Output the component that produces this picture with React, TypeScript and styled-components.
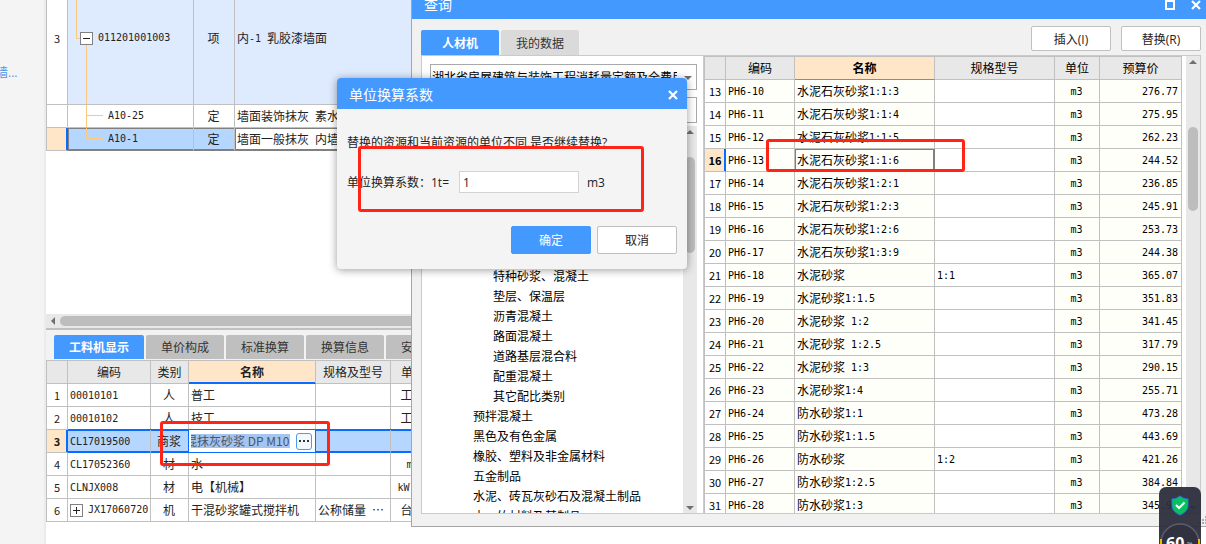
import React from "react";
import styled, { createGlobalStyle, css } from "styled-components";

const BLUE = "#4499ff";
const FOCUS = "#0a6cff";
const LINE = "#c0c0c0";
const RED = "#ff2416";

const GlobalStyle = createGlobalStyle`
  * { box-sizing: border-box; }
  html, body { margin: 0; overflow: hidden; }
  body, button, input, select {
    font-family: "Open Sans", "Noto Sans CJK SC", sans-serif;
    font-size: 12px;
    color: #222;
  }
`;

const Desktop = styled.div`
  position: relative;
  display: flex;
  height: 100vh;
  overflow: hidden;
  background: #fff;
`;

const Sidebar = styled.aside`
  flex: none;
  width: 46px;
  padding-top: 64px;
  overflow: hidden;
  background: #f4f4f4;
  border-right: 2px solid #ebebeb;
`;

const SideLink = styled.a`
  display: block;
  margin-left: -4px;
  line-height: 18px;
  color: #4e95ea;
  text-decoration: none;
  white-space: nowrap;
`;

const Workspace = styled.main`
  flex: 1;
  min-width: 0;
  display: flex;
  flex-direction: column;
`;

const UpperPane = styled.section`
  flex: 1;
  min-height: 0;
  overflow: hidden;
`;

const LowerPane = styled.section`
  flex: none;
  height: 230px;
`;

/* ---------- tables ---------- */

const Grid = styled.table<{ $scrolled?: number }>`
  width: 100%;
  table-layout: fixed;
  border-spacing: 0;
  border-left: 1px solid ${LINE};
  margin-top: -${(p) => p.$scrolled ?? 0}px;
  font-family: "Noto Sans CJK SC", sans-serif;
`;

const HeadCell = styled.th<{ $active?: boolean; $mark?: number }>`
  height: 24px;
  padding: 0;
  line-height: 22px;
  font-weight: ${(p) => (p.$active ? 700 : 400)};
  background: ${(p) => (p.$active ? "#ffe6c8" : "#e8e8e8")};
  border: solid ${LINE};
  border-width: 1px 1px 1px 0;
  white-space: nowrap;
  ${(p) =>
    p.$active &&
    css`
      border-bottom-color: ${p.$mark === 2 ? FOCUS : BLUE};
      box-shadow: ${p.$mark === 2 ? `inset 0 -1px ${FOCUS}` : "none"};
    `}
`;

const Cell = styled.td<{ $align?: "center" | "right"; $bg?: string }>`
  height: 23px;
  padding: 0 3px 0 2px;
  line-height: 20px;
  text-align: ${(p) => p.$align ?? "left"};
  background: ${(p) => p.$bg ?? "#fff"};
  border: solid ${LINE};
  border-width: 0 1px 1px 0;
  white-space: nowrap;
  overflow: hidden;
`;

const NumCell = styled(Cell)<{ $current?: boolean; $focus?: boolean }>`
  padding: 0;
  text-align: center;
  font-size: 11px;
  ${(p) =>
    p.$current &&
    css`
      background: #ffe6c8;
      font-weight: 700;
    `}
  ${(p) =>
    p.$focus &&
    css`
      border-right-color: ${FOCUS};
      box-shadow: inset -1px 0 ${FOCUS};
    `}
`;

const FocusCell = styled(Cell)`
  background: #b5d6ff;
  border-bottom-color: ${FOCUS};
  box-shadow: 0 -1px ${FOCUS}, inset 0 1px ${FOCUS}, inset 0 -1px ${FOCUS};
`;

const EditCell = styled(Cell)`
  border-color: ${FOCUS};
  box-shadow: 0 -1px ${FOCUS}, -1px 0 ${FOCUS};
`;

const PickedCell = styled(Cell)<{ $box?: boolean }>`
  border-bottom-color: #808080;
  box-shadow: inset 0 1px #808080, inset 0 -1px #808080${(p) =>
    p.$box ? ", inset 1px 0 #808080" : ""};
`;

const BoxedCell = styled(Cell)`
  border-right-color: #808080;
  box-shadow: inset 0 1px #808080, inset 1px 0 #808080, inset -1px 0 #808080;
`;

const TallCell = styled(Cell)`
  height: 133px;
`;

const Tree = styled.div`
  display: flex;
  align-items: center;
  margin: 0 -3px 0 -2px;
  svg { display: block; flex: none; overflow: visible; }
`;

const Latin = styled.span`
  font-family: "DejaVu Sans Mono", monospace;
  font-size: 10px;
  line-height: 12px;
  vertical-align: 1px;
  white-space: pre;
`;

/* Half-width runs are set on a 6px pitch, full-width characters on 12px. */
function Mixed({ children }: { children: string }) {
  const runs = children.split(/([\x20-\x7e]+)/).filter(Boolean);
  return (
    <>
      {runs.map((r, i) =>
        /^[\x20-\x7e]/.test(r) ? <Latin key={i}>{r}</Latin> : <span key={i}>{r}</span>
      )}
    </>
  );
}

/* ---------- lower pane parts ---------- */

const HScroll = styled.div`
  display: flex;
  align-items: center;
  gap: 5px;
  height: 14px;
  padding-left: 4px;
  background: #e8e8e8;
  svg { flex: none; }
`;

const HThumb = styled.div`
  flex: 1;
  height: 10px;
  border-radius: 5px;
  background: #bdbdbd;
`;

const TabBar = styled.div`
  display: flex;
  gap: 2px;
  height: 32px;
  padding: 5px 0 0 8px;
  overflow: hidden;
  background: #f2f2f2;
  border-top: 2px solid ${LINE};
`;

const Tab = styled.button<{ $active?: boolean; $wide?: boolean; $light?: boolean }>`
  flex: none;
  width: ${(p) => (p.$wide ? 90 : 78)}px;
  height: ${(p) => (p.$light ? 25 : 24)}px;
  padding: 0;
  border: 0;
  border-radius: 2px 2px 0 0;
  font-weight: ${(p) => (p.$active ? 700 : 400)};
  color: ${(p) => (p.$active ? "#fff" : "#333")};
  background: ${(p) => (p.$active ? BLUE : p.$light ? "#dadada" : "#bfbfbf")};
`;

const Editor = styled.div`
  display: flex;
  align-items: center;
  gap: 6px;
  height: 22px;
`;

const EditInput = styled.input`
  flex: none;
  width: 99px;
  height: 14px;
  padding: 0;
  border: 0;
  text-indent: -6px;
  line-height: 14px;
  font-family: "Noto Sans CJK SC", sans-serif;
  color: #46566c;
  background: #a5c5f0;
`;

const MoreButton = styled.button`
  flex: none;
  display: flex;
  align-items: center;
  justify-content: center;
  width: 16px;
  height: 17px;
  padding: 0;
  border: 1px solid #4a9fe0;
  border-radius: 3px;
  background: #f3f8fd;
`;

/* ---------- query window ---------- */

const QueryWindow = styled.section`
  position: absolute;
  left: 411px;
  right: -6px;
  top: -11px;
  bottom: 17px;
  display: flex;
  flex-direction: column;
  padding: 0 10px 12px 9px;
  background: #f1f1f1;
  border: 1px solid #a6a6a6;
`;

const QueryTitle = styled.header`
  flex: none;
  display: flex;
  align-items: center;
  gap: 16px;
  height: 29px;
  margin: 0 -10px 0 -9px;
  padding: 0 10px 0 12px;
  color: #fff;
  background: ${BLUE};
`;

const WindowName = styled.h1`
  flex: 1;
  margin: 0;
  font-size: 14px;
  font-weight: 400;
  line-height: 20px;
`;

const IconButton = styled.button`
  display: flex;
  padding: 0;
  border: 0;
  background: none;
`;

const QueryBar = styled.div`
  flex: none;
  display: flex;
  align-items: flex-end;
  gap: 2px;
  height: 36px;
`;

const QueryActions = styled.div`
  display: flex;
  gap: 10px;
  margin-left: auto;
  padding-bottom: 4px;
`;

const Button = styled.button<{ $primary?: boolean; $tall?: boolean }>`
  width: 80px;
  height: ${(p) => (p.$tall ? 28 : 25)}px;
  padding: 0;
  border: 1px solid ${(p) => (p.$primary ? BLUE : LINE)};
  border-radius: 2px;
  color: ${(p) => (p.$primary ? "#fff" : "#222")};
  background: ${(p) => (p.$primary ? BLUE : "#fff")};
`;

const Panel = styled.div`
  flex: 1;
  min-height: 0;
  display: flex;
  background: #fff;
  border: 1px solid #cacaca;
`;

const Catalogue = styled.div`
  flex: none;
  display: flex;
  flex-direction: column;
  width: 281px;
  padding: 8px 6px 0 8px;
`;

const SelectBox = styled.div`
  position: relative;
  height: 26px;
  margin-bottom: 7px;
  svg { position: absolute; right: 5px; top: 11px; }
`;

const Select = styled.select`
  appearance: none;
  width: 100%;
  height: 26px;
  padding: 0 19px 0 1px;
  border: 1px solid #a9a9a9;
  border-radius: 0;
  color: #000;
  background: #fff;
`;

const SearchInput = styled.input`
  height: 26px;
  padding: 0 4px;
  border: 1px solid #a9a9a9;
`;

const TreeArea = styled.div`
  flex: 1;
  min-height: 0;
  display: flex;
  margin-top: 3px;
  overflow: hidden;
`;

const TreeList = styled.ul`
  flex: 1;
  margin: 0;
  padding: 141px 0 0 43px;
  list-style: none;
  color: #000;
`;

const TreeItem = styled.li<{ $deep?: boolean }>`
  height: 20px;
  padding-left: ${(p) => (p.$deep ? 20 : 0)}px;
  line-height: 20px;
  white-space: nowrap;
`;

const VScroll = styled.div`
  flex: none;
  display: flex;
  flex-direction: column;
  align-items: center;
  width: 14px;
  padding: 3px 0;
  background: #e8e8e8;
`;

const VThumb = styled.div<{ $gap: number; $size: number }>`
  width: 10px;
  height: ${(p) => p.$size}px;
  margin: ${(p) => p.$gap}px 0 auto;
  border-radius: 5px;
  background: #bdbdbd;
`;

const Results = styled.div`
  flex: 1;
  min-width: 0;
  display: flex;
  gap: 4px;
  overflow: hidden;
  border-left: 1px solid #cacaca;
`;

const ResultsTable = styled.div`
  flex: 1;
  min-width: 0;
  color: #000;
`;

const Grip = styled.svg`
  position: absolute;
  right: 4px;
  bottom: 2px;
`;

/* ---------- dialog ---------- */

const Dialog = styled.section`
  position: absolute;
  left: 337px;
  top: 78px;
  width: 350px;
  border-radius: 4px;
  background: #f4f4f4;
  box-shadow: 0 1px 8px rgba(0, 0, 0, 0.4);
`;

const DialogTitle = styled.header`
  display: flex;
  align-items: center;
  height: 31px;
  padding: 2px 9px 0 12px;
  border-radius: 4px 4px 0 0;
  color: #fff;
  background: ${BLUE};
`;

const DialogBody = styled.div`
  padding: 24px 10px 15px;
`;

const Message = styled.p`
  margin: 0 0 19px;
  line-height: 20px;
  white-space: nowrap;
`;

const FactorRow = styled.div`
  display: flex;
  align-items: center;
  height: 20px;
  margin-bottom: 34px;
`;

const FactorLabel = styled.label`
  width: 112px;
  white-space: nowrap;
`;

const FactorInput = styled.input`
  width: 120px;
  height: 22px;
  margin-right: 8px;
  padding: 0 3px;
  border: 1px solid #d4d4d4;
  background: #fff;
`;

const DialogActions = styled.footer`
  display: flex;
  justify-content: flex-end;
  gap: 6px;
`;

/* ---------- overlays ---------- */

const Highlight = styled.div<{ $x: number; $y: number; $w: number; $h: number }>`
  position: absolute;
  left: ${(p) => p.$x}px;
  top: ${(p) => p.$y}px;
  width: ${(p) => p.$w}px;
  height: ${(p) => p.$h}px;
  border: 3px solid ${RED};
  border-radius: 3px;
  pointer-events: none;
`;

const Widget = styled.aside`
  position: absolute;
  right: 5px;
  bottom: 0;
  width: 42px;
  height: 57px;
  overflow: hidden;
  border-radius: 7px 7px 0 0;
  background: rgba(43, 46, 58, 0.94);
  svg { display: block; }
`;

/* ---------- drawings ---------- */

const Arrow = ({ dir, color = "#6e6e78" }: { dir: "up" | "down" | "left"; color?: string }) => {
  const d = { up: "M0 5L4 1L8 5Z", down: "M0 1H8L4 5Z", left: "M5 0V8L1 4Z" }[dir];
  return (
    <svg width={dir === "left" ? 5 : 8} height={dir === "left" ? 8 : 5} aria-hidden="true">
      <path d={d} fill={color} />
    </svg>
  );
};

const Cross = () => (
  <svg width="10" height="10" viewBox="0 0 10 10" aria-hidden="true">
    <path d="M1 1L9 9M9 1L1 9" stroke="#fff" strokeWidth="2.2" />
  </svg>
);

const Expander = ({ x, y, plus }: { x: number; y: number; plus?: boolean }) => (
  <g transform={`translate(${x} ${y})`}>
    <rect x="0.5" y="0.5" width="12" height="12" fill="#fff" stroke="#808080" />
    <path d={plus ? "M3 6.5H10M6.5 3V10" : "M3 6.5H10"} stroke="#222" fill="none" />
  </g>
);

const BRANCH = "#ffc680";

/* ---------- data ---------- */

const resources = [
  ["水泥石灰砂浆1:1:3", "", "276.77"],
  ["水泥石灰砂浆1:1:4", "", "275.95"],
  ["水泥石灰砂浆1:1:5", "", "262.23"],
  ["水泥石灰砂浆1:1:6", "", "244.52"],
  ["水泥石灰砂浆1:2:1", "", "236.85"],
  ["水泥石灰砂浆1:2:3", "", "245.91"],
  ["水泥石灰砂浆1:2:6", "", "253.73"],
  ["水泥石灰砂浆1:3:9", "", "244.38"],
  ["水泥砂浆", "1:1", "365.07"],
  ["水泥砂浆1:1.5", "", "351.83"],
  ["水泥砂浆 1:2", "", "341.45"],
  ["水泥砂浆 1:2.5", "", "317.79"],
  ["水泥砂浆 1:3", "", "290.15"],
  ["水泥砂浆1:4", "", "255.71"],
  ["防水砂浆1:1", "", "473.28"],
  ["防水砂浆1:1.5", "", "443.69"],
  ["防水砂浆", "1:2", "421.26"],
  ["防水砂浆1:2.5", "", "384.84"],
  ["防水砂浆1:3", "", "345.93"],
].map(([name, spec, price], i) => ({ no: 13 + i, code: `PH6-${10 + i}`, name, spec, price }));

const categories: [string, boolean][] = [
  ["特种砂浆、混凝土", true],
  ["垫层、保温层", true],
  ["沥青混凝土", true],
  ["路面混凝土", true],
  ["道路基层混合料", true],
  ["配重混凝土", true],
  ["其它配比类别", true],
  ["预拌混凝土", false],
  ["黑色及有色金属", false],
  ["橡胶、塑料及非金属材料", false],
  ["五金制品", false],
  ["水泥、砖瓦灰砂石及混凝土制品", false],
  ["木、竹材料及其制品", false],
];

const materials = [
  ["00010101", "人", "普工", "", "工日"],
  ["00010102", "人", "技工", "", "工日"],
  ["CL17019500", "商浆", "", "", ""],
  ["CL17052360", "材", "水", "", "m3"],
  ["CLNJX008", "材", "电【机械】", "", "kW·h"],
  ["JX17060720", "机", "干混砂浆罐式搅拌机", "公称储量 …", "台班"],
];

const IVORY = "#fffffa";

/* ---------- sections ---------- */

function BillTable() {
  return (
    <Grid $scrolled={28}>
      <colgroup>
        <col style={{ width: 21 }} />
        <col style={{ width: 126 }} />
        <col style={{ width: 41 }} />
        <col />
      </colgroup>
      <tbody>
        <tr>
          <NumCell>3</NumCell>
          <TallCell $bg="#deeafe">
            <Tree>
              <svg width="30" height="132" aria-hidden="true">
                <path d="M8.5 0V66.5H12M18.5 73V133" stroke={BRANCH} fill="none" />
                <Expander x={12} y={60} />
              </svg>
              <Mixed>011201001003</Mixed>
            </Tree>
          </TallCell>
          <TallCell $bg="#deeafe" $align="center">项</TallCell>
          <TallCell $bg="#deeafe"><Mixed>内-1 乳胶漆墙面</Mixed></TallCell>
        </tr>
        <tr>
          <NumCell />
          <Cell>
            <Tree>
              <svg width="40" height="22" aria-hidden="true">
                <path d="M18.5 0V23M18.5 10.5H35" stroke={BRANCH} fill="none" />
              </svg>
              <Mixed>A10-25</Mixed>
            </Tree>
          </Cell>
          <Cell $align="center">定</Cell>
          <Cell><Mixed>墙面装饰抹灰 素水泥浆界面剂</Mixed></Cell>
        </tr>
        <tr>
          <NumCell $current $focus />
          <PickedCell $bg="#b5d6ff" $box>
            <Tree>
              <svg width="40" height="22" aria-hidden="true">
                <path d="M18.5 0V10.5H35" stroke={BRANCH} fill="none" />
              </svg>
              <Mixed>A10-1</Mixed>
            </Tree>
          </PickedCell>
          <PickedCell $bg="#b5d6ff" $align="center">定</PickedCell>
          <PickedCell $box><Mixed>墙面一般抹灰 内墙</Mixed></PickedCell>
        </tr>
      </tbody>
    </Grid>
  );
}

function MaterialTable() {
  return (
    <Grid>
      <colgroup>
        <col style={{ width: 21 }} />
        <col style={{ width: 83 }} />
        <col style={{ width: 38 }} />
        <col style={{ width: 127 }} />
        <col style={{ width: 75 }} />
        <col style={{ width: 45 }} />
        <col />
      </colgroup>
      <thead>
        <tr>
          <HeadCell />
          <HeadCell>编码</HeadCell>
          <HeadCell>类别</HeadCell>
          <HeadCell $active $mark={2}>名称</HeadCell>
          <HeadCell>规格及型号</HeadCell>
          <HeadCell>单位</HeadCell>
          <HeadCell />
        </tr>
      </thead>
      <tbody>
        {materials.map(([code, kind, name, spec, unit], i) => {
          const current = i === 2;
          const C = current ? FocusCell : Cell;
          return (
            <tr key={code}>
              <NumCell $current={current} $focus={current}>{i + 1}</NumCell>
              <C>
                {i === 5 ? (
                  <Tree>
                    <svg width="20" height="13" aria-hidden="true">
                      <Expander x={2} y={0} plus />
                    </svg>
                    <Mixed>{code}</Mixed>
                  </Tree>
                ) : (
                  <Mixed>{code}</Mixed>
                )}
              </C>
              <C $align="center">{kind}</C>
              {current ? (
                <EditCell>
                  <Editor>
                    <EditInput aria-label="名称" defaultValue="混抹灰砂浆 DP M10" />
                    <MoreButton aria-label="选择">
                      <svg width="10" height="2" aria-hidden="true">
                        <path d="M0 1H2M4 1H6M8 1H10" stroke="#333" strokeWidth="2" />
                      </svg>
                    </MoreButton>
                  </Editor>
                </EditCell>
              ) : (
                <C><Mixed>{name}</Mixed></C>
              )}
              <C><Mixed>{spec}</Mixed></C>
              <C $align="center"><Mixed>{unit}</Mixed></C>
              <C />
            </tr>
          );
        })}
      </tbody>
    </Grid>
  );
}

function ResourceTable() {
  return (
    <Grid>
      <colgroup>
        <col style={{ width: 21 }} />
        <col style={{ width: 69 }} />
        <col style={{ width: 140 }} />
        <col />
        <col style={{ width: 45 }} />
        <col style={{ width: 82 }} />
      </colgroup>
      <thead>
        <tr>
          <HeadCell />
          <HeadCell>编码</HeadCell>
          <HeadCell $active>名称</HeadCell>
          <HeadCell>规格型号</HeadCell>
          <HeadCell>单位</HeadCell>
          <HeadCell>预算价</HeadCell>
        </tr>
      </thead>
      <tbody>
        {resources.map((r) => {
          const current = r.no === 16;
          const Name = current ? BoxedCell : Cell;
          return (
            <tr key={r.no}>
              <NumCell $current={current} $focus={current}>{r.no}</NumCell>
              <Cell $bg={IVORY}><Mixed>{r.code}</Mixed></Cell>
              <Name $bg={IVORY}><Mixed>{r.name}</Mixed></Name>
              <Cell><Mixed>{r.spec}</Mixed></Cell>
              <Cell $bg={IVORY} $align="center"><Mixed>m3</Mixed></Cell>
              <Cell $bg={IVORY} $align="right"><Mixed>{r.price}</Mixed></Cell>
            </tr>
          );
        })}
      </tbody>
    </Grid>
  );
}

export default function App() {
  return (
    <Desktop>
      <GlobalStyle />
      <Sidebar>
        <SideLink href="#wall">墙...</SideLink>
      </Sidebar>
      <Workspace>
        <UpperPane>
          <BillTable />
        </UpperPane>
        <LowerPane>
          <HScroll>
            <Arrow dir="left" />
            <HThumb />
          </HScroll>
          <TabBar>
            <Tab $active $wide>工料机显示</Tab>
            <Tab>单价构成</Tab>
            <Tab>标准换算</Tab>
            <Tab>换算信息</Tab>
            <Tab>安装费用</Tab>
          </TabBar>
          <MaterialTable />
        </LowerPane>
      </Workspace>

      <QueryWindow>
        <QueryTitle>
          <WindowName>查询</WindowName>
          <IconButton aria-label="最大化">
            <svg width="10" height="10" aria-hidden="true">
              <rect x="1" y="1" width="8" height="8" fill="none" stroke="#fff" strokeWidth="2" />
            </svg>
          </IconButton>
          <IconButton aria-label="关闭查询"><Cross /></IconButton>
        </QueryTitle>
        <QueryBar>
          <Tab $active $light>人材机</Tab>
          <Tab $light>我的数据</Tab>
          <QueryActions>
            <Button>插入(I)</Button>
            <Button>替换(R)</Button>
          </QueryActions>
        </QueryBar>
        <Panel>
          <Catalogue>
            <SelectBox>
              <Select aria-label="定额库">
                <option>湖北省房屋建筑与装饰工程消耗量定额及全费用基价表</option>
              </Select>
              <Arrow dir="down" />
            </SelectBox>
            <SearchInput aria-label="搜索" />
            <TreeArea>
              <TreeList>
                {categories.map(([label, deep]) => (
                  <TreeItem key={label} $deep={deep}>{label}</TreeItem>
                ))}
              </TreeList>
              <VScroll>
                <Arrow dir="up" />
                <VThumb $gap={23} $size={96} />
                <Arrow dir="down" />
              </VScroll>
            </TreeArea>
          </Catalogue>
          <Results>
            <ResultsTable>
              <ResourceTable />
            </ResultsTable>
            <VScroll>
              <Arrow dir="up" />
              <VThumb $gap={63} $size={84} />
              <Arrow dir="down" />
            </VScroll>
          </Results>
        </Panel>
        <Grip width="8" height="8" aria-hidden="true">
          <path d="M6 0h2v2h-2zM3 3h2v2h-2zM6 3h2v2h-2zM0 6h2v2h-2zM3 6h2v2h-2zM6 6h2v2h-2z" fill="#aaa" />
        </Grip>
      </QueryWindow>

      <Dialog role="dialog" aria-label="单位换算系数">
        <DialogTitle>
          <WindowName as="h2">单位换算系数</WindowName>
          <IconButton aria-label="关闭"><Cross /></IconButton>
        </DialogTitle>
        <DialogBody>
          <Message>替换的资源和当前资源的单位不同,是否继续替换?</Message>
          <FactorRow>
            <FactorLabel htmlFor="factor">单位换算系数：1t=</FactorLabel>
            <FactorInput id="factor" defaultValue="1" />
            <span>m3</span>
          </FactorRow>
          <DialogActions>
            <Button $primary $tall>确定</Button>
            <Button $tall>取消</Button>
          </DialogActions>
        </DialogBody>
      </Dialog>

      <Highlight $x={358} $y={146} $w={286} $h={66} />
      <Highlight $x={766} $y={139} $w={199} $h={33} />
      <Highlight $x={160} $y={421} $w={170} $h={45} />

      <Widget>
        <svg width="42" height="57" aria-hidden="true">
          <path d="M21 9C23.500 11 26 12 29 12V18C29 23 25.500 26 21 28C16.500 26 13 23 13 18V12C16 12 18.500 11 21 9Z" fill="#07c160" stroke="#2a78d8" />
          <path d="M17 18L20 21L25.500 15.500" stroke="#fff" strokeWidth="2" fill="none" />
          <circle cx="21" cy="56" r="19" fill="#30333f" stroke="#5c5f6b" strokeWidth="1.500" />
          <path d="M2 52V57M40 52V57" stroke="#f5b800" strokeWidth="2" />
          <text x="7" y="62" fontFamily="Open Sans, sans-serif" fontSize="16" fontWeight="700" fill="#fff">60</text>
          <text x="28" y="60" fontFamily="Open Sans, sans-serif" fontSize="7" fill="#ccc">%</text>
        </svg>
      </Widget>
    </Desktop>
  );
}
